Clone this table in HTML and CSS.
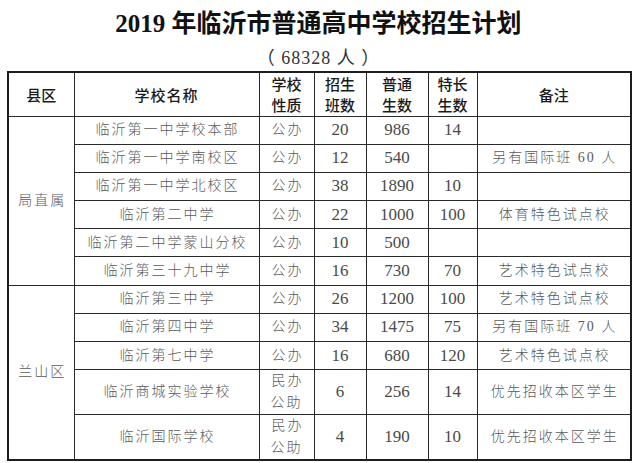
FILE: index.html
```html
<!DOCTYPE html>
<html lang="zh-CN">
<head>
<meta charset="utf-8">
<title>2019年临沂市普通高中学校招生计划</title>
<link rel="stylesheet" href="styles.css">
</head>
<body>
<div class="page">
  <header class="head">
    <h1 class="title">2019 年临沂市普通高中学校招生计划</h1>
    <p class="subtitle">（ 68328 人 ）</p>
  </header>
  <table class="plan">
    <colgroup>
      <col class="c-area"><col class="c-name"><col class="c-type"><col class="c-cls"><col class="c-norm"><col class="c-spec"><col class="c-note">
    </colgroup>
    <thead>
      <tr class="r-head">
        <th>县区</th>
        <th class="wide">学校名称</th>
        <th>学校<br>性质</th>
        <th>招生<br>班数</th>
        <th>普通<br>生数</th>
        <th>特长<br>生数</th>
        <th>备注</th>
      </tr>
    </thead>
    <tbody>
      <tr class="r1">
        <td class="area" rowspan="6">局直属</td>
        <td class="name">临沂第一中学校本部</td><td class="cn">公办</td><td>20</td><td>986</td><td>14</td><td class="cn"></td>
      </tr>
      <tr class="r1">
        <td class="name">临沂第一中学南校区</td><td class="cn">公办</td><td>12</td><td>540</td><td></td><td class="cn">另有国际班 60 人</td>
      </tr>
      <tr class="r1">
        <td class="name">临沂第一中学北校区</td><td class="cn">公办</td><td>38</td><td>1890</td><td>10</td><td class="cn"></td>
      </tr>
      <tr class="r1">
        <td class="name">临沂第二中学</td><td class="cn">公办</td><td>22</td><td>1000</td><td>100</td><td class="cn">体育特色试点校</td>
      </tr>
      <tr class="r1">
        <td class="name">临沂第二中学蒙山分校</td><td class="cn">公办</td><td>10</td><td>500</td><td></td><td class="cn"></td>
      </tr>
      <tr class="r1">
        <td class="name">临沂第三十九中学</td><td class="cn">公办</td><td>16</td><td>730</td><td>70</td><td class="cn">艺术特色试点校</td>
      </tr>
      <tr class="r1">
        <td class="area" rowspan="5">兰山区</td>
        <td class="name">临沂第三中学</td><td class="cn">公办</td><td>26</td><td>1200</td><td>100</td><td class="cn">艺术特色试点校</td>
      </tr>
      <tr class="r1">
        <td class="name">临沂第四中学</td><td class="cn">公办</td><td>34</td><td>1475</td><td>75</td><td class="cn">另有国际班 70 人</td>
      </tr>
      <tr class="r1">
        <td class="name">临沂第七中学</td><td class="cn">公办</td><td>16</td><td>680</td><td>120</td><td class="cn">艺术特色试点校</td>
      </tr>
      <tr class="r2">
        <td class="name">临沂商城实验学校</td><td class="cn two">民办<br>公助</td><td>6</td><td>256</td><td>14</td><td class="cn">优先招收本区学生</td>
      </tr>
      <tr class="r2">
        <td class="name">临沂国际学校</td><td class="cn two">民办<br>公助</td><td>4</td><td>190</td><td>10</td><td class="cn">优先招收本区学生</td>
      </tr>
    </tbody>
  </table>
</div>
</body>
</html>
```
FILE: styles.css
```css
html, body {
  margin: 0;
  padding: 0;
  background: #ffffff;
}

.page {
  width: 640px;
  padding: 0 0 0 7px;
  box-sizing: border-box;
}

.head {
  width: 623px;
  padding-top: 9px;
  text-align: center;
}

.title {
  margin: 0;
  font-family: "Liberation Serif", "Noto Sans CJK SC", serif;
  font-weight: bold;
  font-size: 25px;
  line-height: 30px;
  color: #111111;
}

.subtitle {
  margin: 9px 0 0 0;
  font-family: "Liberation Serif", "Noto Sans CJK SC", serif;
  font-size: 18px;
  line-height: 20px;
  letter-spacing: 1px;
  color: #333333;
}

.plan {
  margin-top: 3px;
  width: 623px;
  border-collapse: collapse;
  table-layout: fixed;
  border: 2px solid #1e1e1e;
}

.c-area { width: 66px; }
.c-name { width: 185px; }
.c-type { width: 55px; }
.c-cls { width: 52px; }
.c-norm { width: 62px; }
.c-spec { width: 49px; }
.c-note { width: 154px; }

.plan th,
.plan td {
  border: 1px solid #2a2a2a;
  padding: 0;
  text-align: center;
  vertical-align: middle;
}

.plan th {
  font-family: "Noto Sans CJK SC", sans-serif;
  font-weight: 500;
  font-size: 15px;
  line-height: 21px;
  color: #1a1a1a;
}

.plan th.wide {
  letter-spacing: 1px;
}

.r-head { height: 44px; }
.r1 { height: 28.2px; }
.r2 { height: 43.5px; }

.plan td {
  font-family: "Liberation Serif", "Noto Sans CJK SC", serif;
  font-size: 17px;
  line-height: 20px;
  color: #4a4a4a;
}

.plan td.name,
.plan td.cn,
.plan td.area {
  font-family: "Liberation Serif", "Noto Sans CJK SC", sans-serif;
  font-size: 14px;
  letter-spacing: 2px;
  text-indent: 2px;
  color: #5a5a5a;
  font-weight: 300;
}

.plan td.two {
  line-height: 22px;
}
```
